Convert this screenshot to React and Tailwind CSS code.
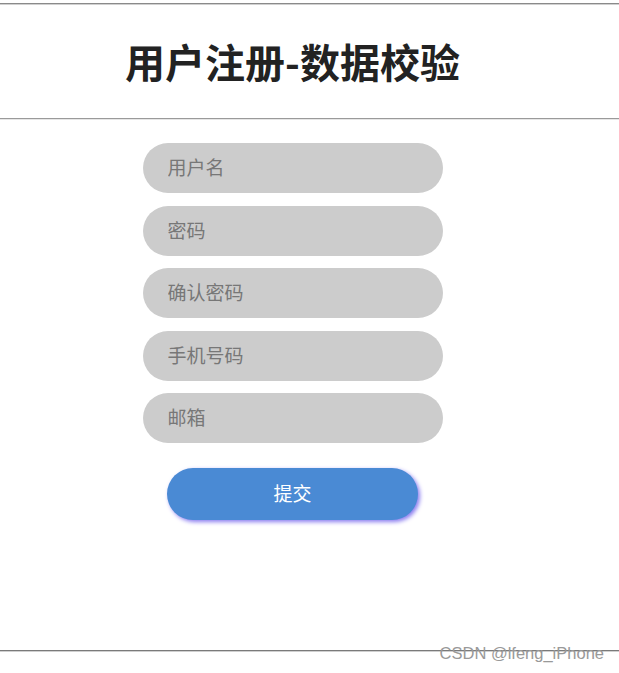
export default function App() {
  const fields = ['用户名', '密码', '确认密码', '手机号码', '邮箱'];

  return (
    <div
      className="relative w-[619px] h-[673px] bg-white overflow-hidden"
      style={{ fontFamily: '"Noto Sans CJK SC", "Noto Sans", sans-serif' }}
    >
      <div className="h-[3px]" />
      <div className="h-[2px] bg-[#8a8a8a] border-b border-[#d0d0d0]" />

      <div className="w-[585px] h-[113px] flex items-center justify-center">
        <h1 className="text-[40px] font-bold text-[#222] leading-none pb-[2px]">用户注册-数据校验</h1>
      </div>
      <div className="h-[1px] bg-[#9a9a9a]" />
      <div className="h-[1px] bg-[#e6e6e6]" />

      <form className="w-[585px] flex flex-col items-center pt-[23px]" onSubmit={(e) => e.preventDefault()}>
        <div className="flex flex-col gap-[12.5px]">
          {fields.map((f) => (
            <input
              key={f}
              type="text"
              placeholder={f}
              className="w-[300px] h-[50px] rounded-full bg-[#cccccc] px-[25px] pb-[3px] text-[19px] text-[#555] placeholder:text-[#777] outline-none"
            />
          ))}
        </div>
        <button
          type="submit"
          className="mt-[25px] w-[251px] h-[52px] rounded-full bg-[#4a8ad4] text-white text-[19px] pb-[2px] shadow-[2px_2px_4px_#8a7cf0]"
        >
          提交
        </button>
      </form>

      <div className="absolute left-0 right-0 top-[650px] h-[2px] bg-[#7a7a7a] border-b border-[#cfcfcf]" />
      <div
        className="absolute right-[15px] top-[645px] text-[16.5px] text-[#999] bg-transparent leading-none"
        style={{ fontFamily: '"Liberation Sans", Arial, sans-serif' }}
      >
        CSDN @lfeng_iPhone
      </div>
    </div>
  );
}
